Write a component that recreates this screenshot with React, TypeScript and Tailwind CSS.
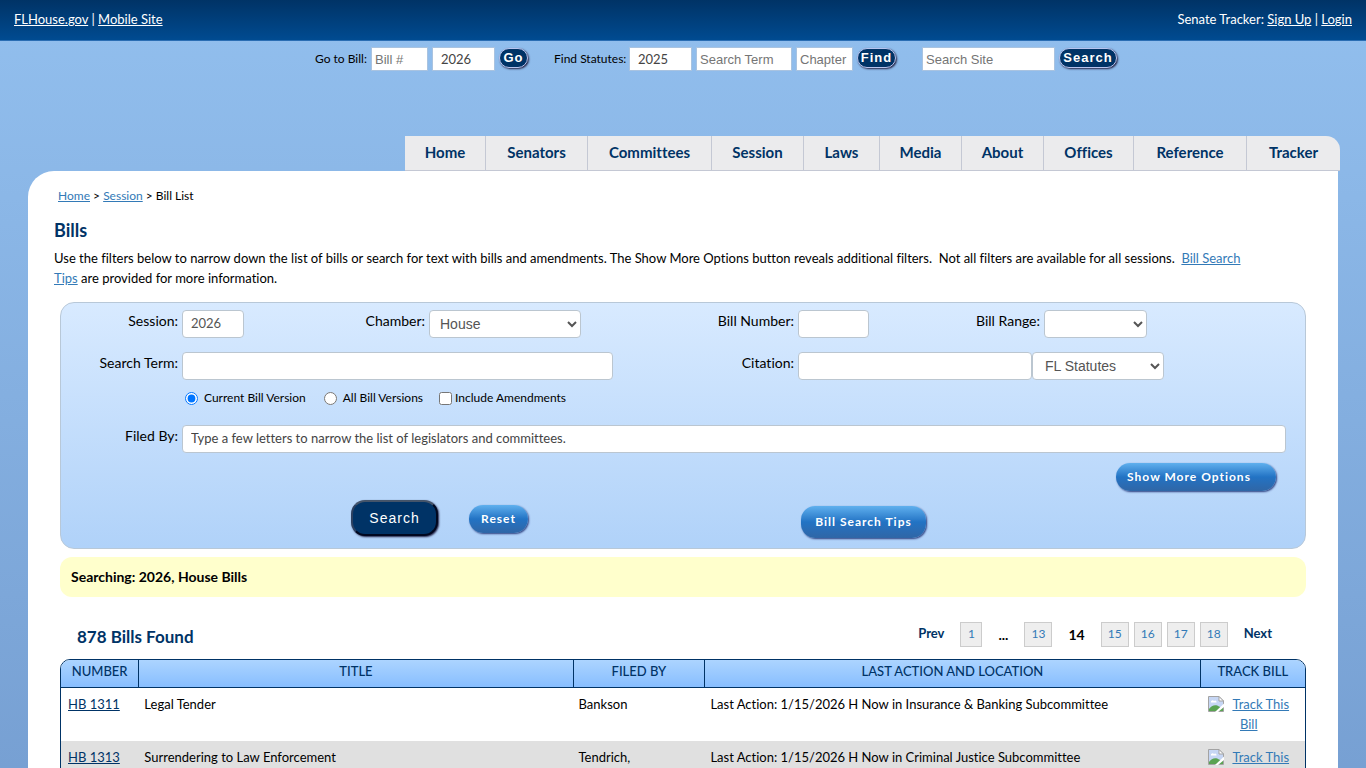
import { useState } from "react";
import { clsx } from "clsx";

const navItems = [
  "Home",
  "Senators",
  "Committees",
  "Session",
  "Laws",
  "Media",
  "About",
  "Offices",
  "Reference",
  "Tracker",
];

const bills = [
  {
    number: "HB 1311",
    title: "Legal Tender",
    filedBy: "Bankson",
    action: "Last Action: 1/15/2026 H Now in Insurance & Banking Subcommittee",
  },
  {
    number: "HB 1313",
    title: "Surrendering to Law Enforcement",
    filedBy: "Tendrich,",
    action: "Last Action: 1/15/2026 H Now in Criminal Justice Subcommittee",
  },
];

const linkClass = "text-[#337ab7] underline";
const topInput =
  "h-6 border border-[#a9c3e0] bg-white px-[3px] text-[13px] text-[#444] placeholder:font-['Liberation_Sans',sans-serif] placeholder:text-[#757575]";
const topButton =
  "mb-0.5 h-5 rounded-full border border-[#b9c4ee] bg-[#003366] font-['Liberation_Sans',sans-serif] text-[13px] leading-4 font-bold tracking-[1px] text-white shadow-[1px_1px_2px_#224]";
const field =
  "h-7 w-full rounded-[4px] border border-[#bbc6d0] bg-white px-2 text-[#555]";
const selectField = `${field} pl-1.5 font-['Liberation_Sans',sans-serif] text-[14px]`;
const fieldLabel = "pt-px text-right text-[14px] leading-5 text-black";
const blueButton =
  "rounded-[14px] bg-linear-to-b from-[#5fb0ee] via-[#2273c4] via-50% to-[#2f66a6] text-[12px] font-bold tracking-[1px] text-white shadow-[1px_1px_2px_#2b3f80]";

const TopBar = () => {
  return (
    <div className="flex h-[41px] items-center justify-between border-b border-[#2a6db3] bg-linear-to-b from-[#003366] to-[#004b91] px-3.5 text-[13px] text-white">
      <div>
        <a href="#" className="underline">
          FLHouse.gov
        </a>{" "}
        |{" "}
        <a href="#" className="underline">
          Mobile Site
        </a>
      </div>
      <div>
        Senate Tracker:{" "}
        <a href="#" className="underline">
          Sign Up
        </a>{" "}
        |{" "}
        <a href="#" className="underline">
          Login
        </a>
      </div>
    </div>
  );
};

const QuickSearch = () => {
  return (
    <div className="flex items-center pt-1.5 pl-[315px] text-[12px] text-black">
      <form className="flex items-center gap-1" onSubmit={(e) => e.preventDefault()}>
        <label htmlFor="goBill" className="w-[52px] whitespace-nowrap">
          Go to Bill:
        </label>
        <input id="goBill" placeholder="Bill #" className={clsx(topInput, "w-[57px]")} />
        <input aria-label="Bill session" defaultValue="2026" className={clsx(topInput, "w-[63px] pl-2")} />
        <button className={clsx(topButton, "w-[29px]")}>Go</button>
      </form>
      <form className="ml-[26px] flex items-center gap-1" onSubmit={(e) => e.preventDefault()}>
        <label htmlFor="statYear" className="w-[71px] whitespace-nowrap">
          Find Statutes:
        </label>
        <input id="statYear" defaultValue="2025" className={clsx(topInput, "w-[63px] pl-2")} />
        <input aria-label="Statute search term" placeholder="Search Term" className={clsx(topInput, "w-24")} />
        <input aria-label="Chapter" placeholder="Chapter" className={clsx(topInput, "w-[57px]")} />
        <button className={clsx(topButton, "w-[39px]")}>Find</button>
      </form>
      <form className="ml-[26px] flex items-center gap-1" onSubmit={(e) => e.preventDefault()}>
        <input aria-label="Search site" placeholder="Search Site" className={clsx(topInput, "w-[133px]")} />
        <button className={clsx(topButton, "w-[58px]")}>Search</button>
      </form>
    </div>
  );
};

const Nav = () => {
  return (
    <nav className="mt-[65px] mr-[26px] ml-auto grid h-[35px] w-[935px] grid-cols-[81fr_102fr_124fr_92fr_76fr_82fr_82fr_90fr_113fr_93fr] overflow-hidden rounded-tr-[14px] border-b border-[#c4c8d4] bg-[#ebebed]">
      {navItems.map((item, i) => (
        <a
          key={item}
          href="#"
          className={clsx(
            "flex items-center justify-center pb-0.5 text-[15px] font-bold text-[#003366]",
            i < navItems.length - 1 && "border-r border-[#c4c8d4]"
          )}
        >
          {item}
        </a>
      ))}
    </nav>
  );
};

const BillFilters = () => {
  const [version, setVersion] = useState("current");

  return (
    <form
      onSubmit={(e) => e.preventDefault()}
      className="mx-8 mt-3.5 rounded-[14px] border border-[#b8c8d8] bg-linear-to-b from-[#d8eaff] to-[#b0d2f9] pt-[7px] pb-2.5"
    >
      <div className="grid grid-cols-[117fr_62fr_177fr_152fr_209fr_71fr_167fr_103fr_154fr] gap-x-1">
        <label htmlFor="session" className={fieldLabel}>Session:</label>
        <input id="session" defaultValue="2026" className={clsx(field, "pb-0.5 text-[13px]")} />
        <label htmlFor="chamber" className={fieldLabel}>Chamber:</label>
        <select id="chamber" defaultValue="House" className={selectField}>
          <option>House</option>
          <option>Senate</option>
        </select>
        <label htmlFor="billNumber" className={fieldLabel}>Bill Number:</label>
        <input id="billNumber" className={field} />
        <label htmlFor="billRange" className={fieldLabel}>Bill Range:</label>
        <select id="billRange" className={selectField}>
          <option></option>
        </select>
      </div>

      <div className="mt-3.5 grid grid-cols-[117fr_431fr_177fr_366fr_137fr] gap-x-1">
        <label htmlFor="searchTerm" className={fieldLabel}>Search Term:</label>
        <input id="searchTerm" className={field} />
        <label htmlFor="citation" className={fieldLabel}>Citation:</label>
        <div className="grid grid-cols-[234fr_132fr]">
          <input id="citation" className={field} />
          <select aria-label="Citation type" className={clsx(selectField, "pl-2")}>
            <option>FL Statutes</option>
            <option>FL Constitution</option>
          </select>
        </div>
      </div>

      <div className="mt-2 ml-[124px] flex h-5 items-center text-[12px] text-black">
        <label className="mr-[18px] flex items-center gap-1.5">
          <input type="radio" name="version" className="size-[13px]" checked={version === "current"} onChange={() => setVersion("current")} />
          Current Bill Version
        </label>
        <label className="mr-4 flex items-center gap-1.5">
          <input type="radio" name="version" className="size-[13px]" checked={version === "all"} onChange={() => setVersion("all")} />
          All Bill Versions
        </label>
        <label className="flex items-center gap-[3px]">
          <input type="checkbox" className="size-[13px]" />
          Include Amendments
        </label>
      </div>

      <div className="mt-[17px] grid grid-cols-[117fr_1104fr_15fr] gap-x-1">
        <label htmlFor="filedBy" className={fieldLabel}>Filed By:</label>
        <input
          id="filedBy"
          placeholder="Type a few letters to narrow the list of legislators and committees."
          className={clsx(field, "pb-0.5 text-[13px] placeholder:text-[#444]")}
        />
      </div>

      <div className="mt-2.5 mr-[29px] flex justify-end">
        <button type="button" className={clsx(blueButton, "h-7 w-40 pr-3.5")}>
          Show More Options
        </button>
      </div>

      <div className="mt-[9px] grid grid-cols-[290fr_118fr_332fr_504fr] items-start">
        <span />
        <div>
          <button className="h-9 w-[87px] rounded-[14px] border-2 border-t-[#44546a] border-r-[#000820] border-b-[#000820] border-l-[#2c4060] bg-[#003366] font-['Liberation_Sans',sans-serif] text-[14px] tracking-[1px] text-white shadow-[1px_1px_2px_#224]">
            Search
          </button>
        </div>
        <div className="pt-[5px]">
          <button type="reset" className={clsx(blueButton, "h-7 w-[59px]")}>
            Reset
          </button>
        </div>
        <div className="pt-1.5">
          <button type="button" className={clsx(blueButton, "h-8 w-[125px]")}>
            Bill Search Tips
          </button>
        </div>
      </div>
    </form>
  );
};

const Pager = () => {
  const box =
    "flex h-[25px] items-center justify-center border border-[#ccc] bg-[#eee] text-[12px] font-normal text-[#337ab7]";
  return (
    <div className="flex items-center text-[13px] font-bold text-[#003366]">
      <a href="#" className="mr-4">Prev</a>
      <a href="#" className={clsx(box, "w-[22px]")}>1</a>
      <span className="mx-4 text-[14px] text-black">...</span>
      <a href="#" className={clsx(box, "w-7")}>13</a>
      <span className="mx-4 text-[14px] text-black">14</span>
      <div className="flex gap-[5px]">
        {["15", "16", "17", "18"].map((page) => (
          <a key={page} href="#" className={clsx(box, "w-7")}>
            {page}
          </a>
        ))}
      </div>
      <a href="#" className="ml-4">Next</a>
    </div>
  );
};

const BrokenImage = () => {
  return (
    <svg width="16" height="16" viewBox="0 0 16 16" aria-hidden="true" className="mr-2 inline-block align-text-top">
      <path d="M0.5 0.5H11L15.5 5V15.5H0.5Z" fill="#c6d6f4" stroke="#a3a3a3" />
      <path d="M3 6.500a1.700 1.700 0 0 1 3-1.500a1.500 1.500 0 0 1 2.500 1.500Z" fill="#fff" />
      <path d="M1 15V13C3.500 9 8 8 11 10.500L15 12V15Z" fill="#5aa352" />
      <path d="M16 7.500L7 16H10L16 11Z" fill="#fff" />
      <path d="M11 0.500V5H15.500Z" fill="#fff" stroke="#a3a3a3" />
    </svg>
  );
};

const BillTable = () => {
  const head =
    "h-7 border-b border-[#003366] pb-1 text-[13px] font-medium text-[#003366]";
  return (
    <div className="mx-8 mt-3 overflow-hidden rounded-t-[10px] border border-[#003366]">
      <table className="w-full table-fixed border-separate border-spacing-0">
        <colgroup>
          <col className="w-[6.3%]" />
          <col className="w-[34.9%]" />
          <col className="w-[10.6%]" />
          <col className="w-[39.8%]" />
          <col className="w-[8.4%]" />
        </colgroup>
        <thead className="bg-linear-to-b from-[#acd4ff] to-[#86bdff]">
          <tr>
            {["NUMBER", "TITLE", "FILED BY", "LAST ACTION AND LOCATION", "TRACK BILL"].map((h, i) => (
              <th key={h} className={clsx(head, i < 4 && "border-r")}>
                {h}
              </th>
            ))}
          </tr>
        </thead>
        <tbody className="text-[13px] leading-5 text-black">
          {bills.map((bill, i) => (
            <tr key={bill.number} className={clsx("align-top", i % 2 === 1 && "bg-[#e0e0e0]")}>
              <td className="px-[7px] pt-1.5 pb-[7px]">
                <a href="#" className="text-[#003366] underline">{bill.number}</a>
              </td>
              <td className="px-[5px] pt-1.5">{bill.title}</td>
              <td className="px-[5px] pt-1.5">{bill.filedBy}</td>
              <td className="px-[5px] pt-1.5">{bill.action}</td>
              <td className="pt-1.5 pr-3 pb-[7px] pl-1 text-center">
                <a href="#" className="text-[#337ab7] underline">
                  <BrokenImage />
                  Track This Bill
                </a>
              </td>
            </tr>
          ))}
        </tbody>
      </table>
    </div>
  );
};

const App = () => {
  return (
    <div className="min-h-screen bg-linear-to-b from-[#92bfee] to-[#769fd2] font-['Lato','Open_Sans',sans-serif] [font-variant-ligatures:none]">
      <TopBar />
      <QuickSearch />
      <Nav />
      <main className="mx-7 rounded-tl-[26px] bg-white pt-[15px]">
        <p className="ml-[30px] text-[12px] leading-5 text-black">
          <a href="#" className={linkClass}>Home</a> &gt;{" "}
          <a href="#" className={linkClass}>Session</a> &gt; Bill List
        </p>
        <h1 className="mt-3 ml-[26px] text-[18px] leading-6 font-bold text-[#003366]">Bills</h1>
        <p className="mt-1.5 mr-[82px] ml-[26px] text-[13px] leading-5 text-black">
          Use the filters below to narrow down the list of bills or search for text with bills and
          amendments. The Show More Options button reveals additional filters.&nbsp; Not all filters
          are available for all sessions.&nbsp;{" "}
          <a href="#" className={linkClass}>Bill Search Tips</a> are provided for more information.
        </p>
        <BillFilters />
        <div className="mx-8 mt-2 rounded-[12px] bg-[#ffffcc] px-[11px] py-2.5 text-[14px] leading-5 font-bold text-black">
          Searching: 2026, House Bills
        </div>
        <div className="mt-6 mr-[66px] ml-[49px] flex items-center justify-between">
          <h2 className="pt-1.5 text-[17px] leading-5 font-bold text-[#003366]">878 Bills Found</h2>
          <Pager />
        </div>
        <BillTable />
      </main>
    </div>
  );
};

export default App;
